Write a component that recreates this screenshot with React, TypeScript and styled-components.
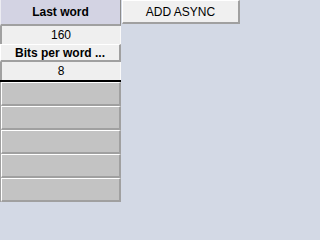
import styled, { createGlobalStyle } from 'styled-components';

const GlobalStyle = createGlobalStyle`
    html, body {
        margin: 0;
        padding: 0;
        background: #d3d9e5;
    }
    body {
        font-family: 'Liberation Sans', Arial, sans-serif;
        font-size: 12px;
        color: #000;
    }
`;

const Page = styled.div`
    display: flex;
    align-items: flex-start;
    width: 242px;
    height: 204px;
`;

const Column = styled.div`
    display: flex;
    flex-direction: column;
    width: 121px;
`;

const Header = styled.div`
    height: 24px;
    background: #d3d3e3;
    border-bottom: 2px solid #a0a0a0;
    border-right: 1px solid #8c8c8c;
    border-left: 1px solid #ececf2;
    display: flex;
    align-items: center;
    justify-content: center;
    font-weight: bold;
`;

const ValueCell = styled.div`
    height: 18px;
    background: #efefef;
    border-left: 2px solid #a0a0a0;
    border-right: 1px solid #fafafa;
    display: flex;
    align-items: center;
    justify-content: center;
`;

// raised look: light top/left edge, darker bottom/right edge
const LabelCell = styled.div`
    height: 15px;
    background: #f0f0f0;
    border-top: 1px solid #ffffff;
    border-left: 1px solid #ffffff;
    border-right: 2px solid #a0a0a0;
    border-bottom: 2px solid #a0a0a0;
    display: flex;
    align-items: center;
    justify-content: center;
    font-weight: bold;
    white-space: nowrap;
`;

const Divider = styled.div`
    height: 2px;
    background: #000;
`;

const EmptyList = styled.div`
    display: flex;
    flex-direction: column;
    border-left: 1px solid #a0a0a0;
`;

const EmptyCell = styled.div`
    height: 21px;
    background: #c3c3c3;
    border-top: 1px solid #ffffff;
    border-left: 1px solid #ffffff;
    border-right: 2px solid #a0a0a0;
    border-bottom: 2px solid #a0a0a0;
`;

const Side = styled.div`
    display: flex;
    flex-direction: column;
    padding-left: 1px;
`;

const Button = styled.button`
    width: 118px;
    height: 24px;
    padding: 0;
    margin: 0;
    background: #f0f0f0;
    border-top: 1px solid #ffffff;
    border-left: 1px solid #ffffff;
    border-right: 2px solid #a0a0a0;
    border-bottom: 2px solid #a0a0a0;
    font-family: 'Liberation Sans', Arial, sans-serif;
    font-size: 12px;
    color: #000;
    display: flex;
    align-items: center;
    justify-content: center;
`;

const emptyRows = [0, 1, 2, 3, 4];

export default function App() {
    return (
        <>
            <GlobalStyle />
            <Page>
                <Column>
                    <Header>Last word</Header>
                    <ValueCell>160</ValueCell>
                    <LabelCell>Bits per word ...</LabelCell>
                    <ValueCell>8</ValueCell>
                    <Divider />
                    <EmptyList>
                        {emptyRows.map((i) => (
                            <EmptyCell key={i} />
                        ))}
                    </EmptyList>
                </Column>
                <Side>
                    <Button>ADD ASYNC</Button>
                </Side>
            </Page>
        </>
    );
}
